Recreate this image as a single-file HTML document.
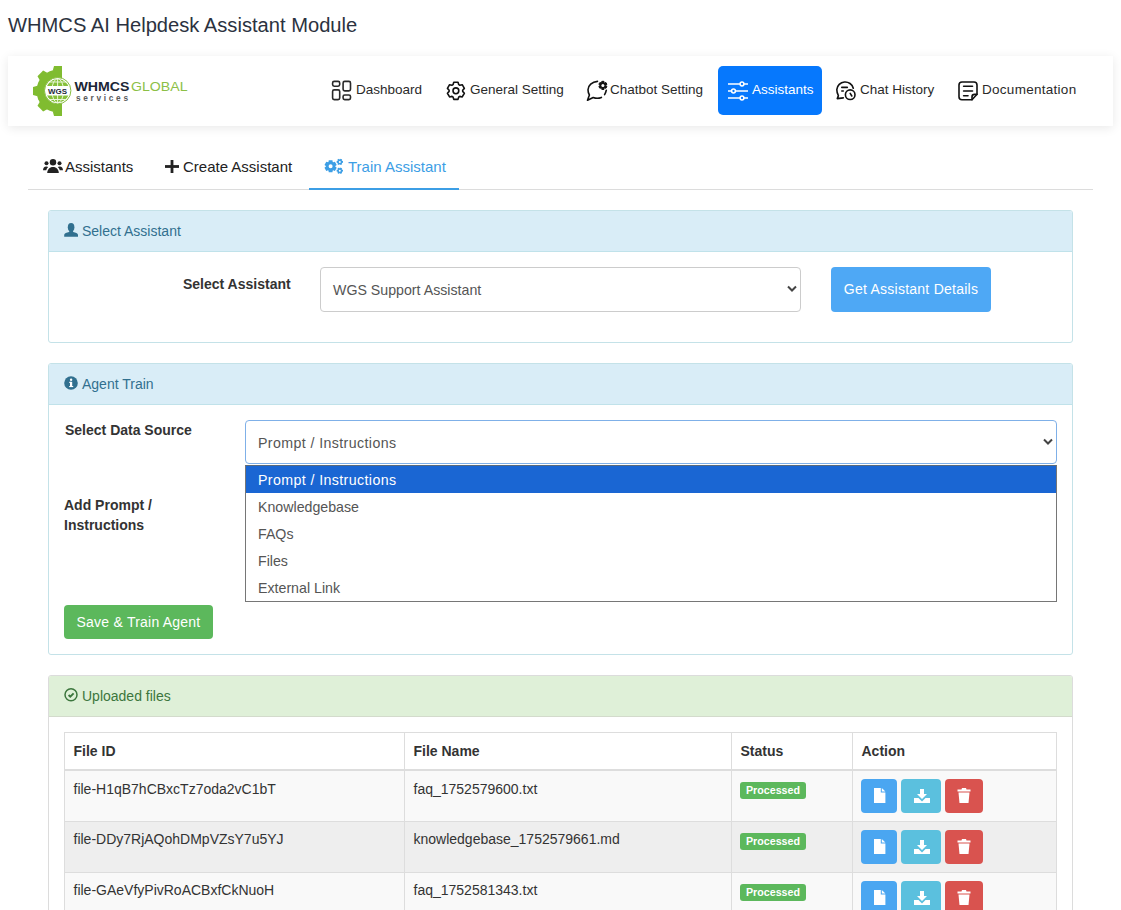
<!DOCTYPE html>
<html><head><meta charset="utf-8">
<style>
*{box-sizing:border-box;margin:0;padding:0}
html,body{width:1121px;height:910px;overflow:hidden;background:#fff;font-family:"Liberation Sans",sans-serif;color:#333}
.a{position:absolute;white-space:nowrap}
#title{left:8px;top:12px;font-size:20.15px;line-height:26px;color:#2b3240}
#nav{left:8px;top:56px;width:1105px;height:70px;background:#fff;box-shadow:0 2px 10px rgba(0,0,0,.09)}
.nt{font-size:13.5px;color:#2a2a2a;line-height:16px;top:82px}
.ico{position:absolute}
#act{left:718px;top:66px;width:104px;height:49px;background:#0678fd;border-radius:5px}
.tab{font-size:15px;line-height:18px;top:158px;color:#222}
#tabline{left:28px;top:189px;width:1065px;height:1px;background:#dcdcdc}
#tabact{left:309px;top:188px;width:150px;height:2px;background:#3c9ee5}
.panel{position:absolute;left:48px;width:1025px;border:1px solid #c4e2e8;border-radius:3px;background:#fff;overflow:hidden}
.ph{position:absolute;left:0;top:0;right:0;height:41px;background:#d9edf7;border-bottom:1px solid #c0e2ea}
.pt{font-size:14px;line-height:16px;color:#31708f}
.lbl{font-weight:bold;font-size:14px;line-height:20px;color:#333}
.box{position:absolute;border:1px solid #ccc;border-radius:4px;background:#fff}
.ot{font-size:14.2px;line-height:18px;color:#555}
.btn{position:absolute;border-radius:4px;color:#fff;font-size:14px;line-height:18px;text-align:center}
table{position:absolute;left:64px;top:732px;width:993px;border-collapse:collapse;font-size:14px;color:#333}
td,th{border:1px solid #ddd;text-align:left;vertical-align:top;padding:0 0 0 8.5px}
th{height:37px;line-height:36px;border-bottom:2px solid #ddd;font-weight:bold;padding-top:0}
td{height:51px;padding-top:8.5px;line-height:18px}
.badge{font-size:10.7px;font-weight:bold;color:#fff;background:#5cb85c;border-radius:3px;width:66px;height:17px;line-height:17px;text-align:center}
.abtn{height:34px;border-radius:4px}
</style></head><body>
<div id="title" class="a">WHMCS AI Helpdesk Assistant Module</div>

<div id="nav" class="a"></div>

<!-- logo -->
<svg class="ico" style="left:28px;top:62px" width="170" height="60" viewBox="28 62 170 60">
  <defs><clipPath id="gc"><rect x="20" y="60" width="42" height="60"/></clipPath><clipPath id="gl"><circle cx="57.7" cy="90.7" r="12"/></clipPath></defs>
  <g clip-path="url(#gc)" fill="#80bc30">
    <circle cx="58" cy="91" r="21.5"/><polygon points="52.80,111.50 54.00,116.00 62.00,116.00 63.20,111.50"/><polygon points="39.83,101.82 37.49,105.85 43.15,111.51 47.18,109.17"/><polygon points="37.50,85.80 33.00,87.00 33.00,95.00 37.50,96.20"/><polygon points="47.18,72.83 43.15,70.49 37.49,76.15 39.83,80.18"/><polygon points="63.20,70.50 62.00,66.00 54.00,66.00 52.80,70.50"/>
  </g>
  <circle cx="57.7" cy="90.7" r="13.2" fill="#fff" stroke="#86bd3e" stroke-width="1"/>
  <g clip-path="url(#gl)">
    <circle cx="57.7" cy="90.7" r="11.6" fill="#86c03a"/>
    <g stroke="#eaf7d8" stroke-width="1" fill="none">
      <ellipse cx="57.7" cy="90.7" rx="5.8" ry="12"/>
      <line x1="57.6" y1="78" x2="57.6" y2="104"/>
      <line x1="44" y1="82" x2="72" y2="82"/>
      <line x1="44" y1="99.5" x2="72" y2="99.5"/>
    </g>
    <rect x="44" y="86" width="28" height="9.5" fill="#fff"/>
  </g>
  <text x="48" y="93.6" font-family="Liberation Sans" font-weight="bold" font-size="7.4" fill="#1d2a3a" textLength="19" lengthAdjust="spacingAndGlyphs">WGS</text>
  <text x="74.5" y="91.3" font-family="Liberation Sans" font-weight="bold" font-size="13" fill="#1b2636" textLength="55" lengthAdjust="spacingAndGlyphs">WHMCS</text>
  <text x="131" y="91.3" font-family="Liberation Sans" font-size="13" fill="#8cc046" textLength="56.5" lengthAdjust="spacingAndGlyphs">GLOBAL</text>
  <text x="76" y="100.8" font-family="Liberation Sans" font-weight="bold" font-size="8.3" fill="#5a5a5a" textLength="52" lengthAdjust="spacing">services</text>
</svg>

<!-- nav items -->
<svg class="ico" style="left:327px;top:76px" width="30" height="28" viewBox="0 0 30 28" fill="none" stroke="#2a2a2a" stroke-width="1.6">
  <rect x="5.6" y="5.4" width="7.1" height="4.8" rx="1.6"/><rect x="5.6" y="13.9" width="7.1" height="9.7" rx="1.6"/>
  <rect x="16.1" y="5.4" width="7.4" height="9.5" rx="1.6"/><rect x="16.1" y="19" width="7.4" height="4.6" rx="1.6"/>
</svg>
<div class="a nt" style="left:356px">Dashboard</div>

<svg class="ico" style="left:442px;top:76px" width="30" height="28" viewBox="0 0 30 28" fill="none" stroke="#111" stroke-width="1.6" stroke-linejoin="round">
  <path d="M11.03 8.64L11.77 6.26L16.03 6.26L16.77 8.64A6.80 6.80 0 0 1 17.80 9.23L20.23 8.69L22.36 12.37L20.67 14.21A6.80 6.80 0 0 1 20.67 15.39L22.36 17.23L20.23 20.91L17.80 20.37A6.80 6.80 0 0 1 16.77 20.96L16.03 23.34L11.77 23.34L11.03 20.96A6.80 6.80 0 0 1 10.00 20.37L7.57 20.91L5.44 17.23L7.13 15.39A6.80 6.80 0 0 1 7.13 14.21L5.44 12.37L7.57 8.69L10.00 9.23A6.80 6.80 0 0 1 11.03 8.64Z"/>
  <circle cx="13.9" cy="14.8" r="2.9"/>
</svg>
<div class="a nt" style="left:470px">General Setting</div>

<svg class="ico" style="left:582px;top:76px" width="30" height="28" viewBox="0 0 30 28" fill="none" stroke="#111" stroke-width="1.6" stroke-linecap="round" stroke-linejoin="round">
  <path d="M15.5 5.4C10 5.8 6 9.5 6 13.8c0 2.2.5 3.8 1.4 5.2L5.5 24.3l5.7-2.8c2.8 1.1 5.8.9 8.2-.1"/>
  <path d="M24.3 14.2c-.3 1.6-.8 3.1-1.7 4.4"/>
  <path d="M19.72 6.75L19.81 5.34L21.99 5.34L22.08 6.75A2.90 2.90 0 0 1 22.60 7.05L23.87 6.43L24.96 8.31L23.78 9.10A2.90 2.90 0 0 1 23.78 9.70L24.96 10.49L23.87 12.37L22.60 11.75A2.90 2.90 0 0 1 22.08 12.05L21.99 13.46L19.81 13.46L19.72 12.05A2.90 2.90 0 0 1 19.20 11.75L17.93 12.37L16.84 10.49L18.02 9.70A2.90 2.90 0 0 1 18.02 9.10L16.84 8.31L17.93 6.43L19.20 7.05A2.90 2.90 0 0 1 19.72 6.75Z" fill="#111" stroke-width="1"/>
  <circle cx="20.9" cy="9.4" r="1.5" fill="#fff" stroke="none"/>
</svg>
<div class="a nt" style="left:610px">Chatbot Setting</div>

<div id="act" class="a"></div>
<svg class="ico" style="left:718px;top:66px" width="104" height="49" viewBox="718 66 104 49" fill="none" stroke="#fff" stroke-width="1.5">
  <line x1="728" y1="84" x2="740" y2="84"/><line x1="744" y1="84" x2="748" y2="84"/><circle cx="742" cy="84" r="1.9"/>
  <line x1="728" y1="91" x2="731.5" y2="91"/><line x1="735.5" y1="91" x2="748" y2="91"/><circle cx="733.5" cy="91" r="1.9"/>
  <line x1="728" y1="98" x2="740" y2="98"/><line x1="744" y1="98" x2="748" y2="98"/><circle cx="742" cy="98" r="1.9"/>
</svg>
<div class="a nt" style="left:752px;color:#fff">Assistants</div>

<svg class="ico" style="left:832px;top:76px" width="30" height="28" viewBox="0 0 30 28" fill="none" stroke="#111" stroke-width="1.6" stroke-linecap="round" stroke-linejoin="round">
  <path d="M21.3 12.2A8.4 8.3 0 0 0 4.8 13.6c0 2.4.6 4.3 1.6 6L5.3 22.6l6-.7"/>
  <line x1="9.8" y1="11.4" x2="15.3" y2="11.4"/><line x1="9.8" y1="15" x2="11.3" y2="15"/>
  <circle cx="18.2" cy="18.7" r="4.8"/><path d="M18.2 17.4l1.6 2.6"/>
</svg>
<div class="a nt" style="left:860px">Chat History</div>

<svg class="ico" style="left:953px;top:76px" width="30" height="28" viewBox="0 0 30 28" fill="none" stroke="#111" stroke-width="1.6" stroke-linecap="round" stroke-linejoin="round">
  <path d="M9 6h12a3 3 0 0 1 3 3v9.3L19 23.7H9a3 3 0 0 1-3-3V9a3 3 0 0 1 3-3z"/>
  <path d="M24 18.4h-2.5a2.5 2.5 0 0 0-2.5 2.5v2.8"/>
  <line x1="10.6" y1="10.3" x2="19.5" y2="10.3"/><line x1="10.6" y1="15" x2="19.5" y2="15"/><line x1="10.6" y1="19.7" x2="15" y2="19.7"/>
</svg>
<div class="a nt" style="left:982px;letter-spacing:.28px">Documentation</div>

<!-- tabs -->
<svg class="ico" style="left:43px;top:159px" width="20" height="14" viewBox="0 0 20 14" fill="#222">
  <circle cx="10" cy="3.3" r="3.2"/><path d="M4.2 14c0-3.3 2.3-6 5.8-6s5.8 2.7 5.8 6z"/>
  <circle cx="3.5" cy="4.3" r="2"/><path d="M0 11.2c0-2.2 1.3-3.7 3.2-3.7 1 0 1.6.3 2 .6-1 .9-1.7 2-2 3.1z"/>
  <circle cx="16.5" cy="4.3" r="2"/><path d="M20 11.2c0-2.2-1.3-3.7-3.2-3.7-1 0-1.6.3-2 .6 1 .9 1.7 2 2 3.1z"/>
</svg>
<div class="a tab" style="left:65px">Assistants</div>
<svg class="ico" style="left:165px;top:160px" width="14" height="13" viewBox="0 0 14 13" fill="#222">
  <rect x="5.6" y="0" width="2.8" height="13"/><rect x="0" y="5.1" width="14" height="2.8"/>
</svg>
<div class="a tab" style="left:183px">Create Assistant</div>
<svg class="ico" style="left:318px;top:154px" width="30" height="24" viewBox="318 154 30 24" fill="#3c9ee5" fill-rule="evenodd"><path d="M328.47 162.11L328.76 160.28L332.44 160.28L332.73 162.11A4.70 4.70 0 0 1 333.16 162.36L334.90 161.69L336.74 164.88L335.29 166.05A4.70 4.70 0 0 1 335.29 166.55L336.74 167.72L334.90 170.91L333.16 170.24A4.70 4.70 0 0 1 332.73 170.49L332.44 172.32L328.76 172.32L328.47 170.49A4.70 4.70 0 0 1 328.04 170.24L326.30 170.91L324.46 167.72L325.91 166.55A4.70 4.70 0 0 1 325.91 166.05L324.46 164.88L326.30 161.69L328.04 162.36A4.70 4.70 0 0 1 328.47 162.11ZM328.60 166.30a2.00 2.00 0 1 0 4.00 0a2.00 2.00 0 1 0 -4.00 0Z"/><path d="M339.97 159.51L340.60 158.70L342.17 159.61L341.79 160.56A2.40 2.40 0 0 1 341.96 160.85L342.97 160.99L342.97 162.81L341.96 162.95A2.40 2.40 0 0 1 341.79 163.24L342.17 164.19L340.60 165.10L339.97 164.29A2.40 2.40 0 0 1 339.63 164.29L339.00 165.10L337.43 164.19L337.81 163.24A2.40 2.40 0 0 1 337.64 162.95L336.63 162.81L336.63 160.99L337.64 160.85A2.40 2.40 0 0 1 337.81 160.56L337.43 159.61L339.00 158.70L339.63 159.51A2.40 2.40 0 0 1 339.97 159.51ZM338.80 161.90a1.00 1.00 0 1 0 2.00 0a1.00 1.00 0 1 0 -2.00 0Z"/><path d="M339.97 168.31L340.60 167.50L342.17 168.41L341.79 169.36A2.40 2.40 0 0 1 341.96 169.65L342.97 169.79L342.97 171.61L341.96 171.75A2.40 2.40 0 0 1 341.79 172.04L342.17 172.99L340.60 173.90L339.97 173.09A2.40 2.40 0 0 1 339.63 173.09L339.00 173.90L337.43 172.99L337.81 172.04A2.40 2.40 0 0 1 337.64 171.75L336.63 171.61L336.63 169.79L337.64 169.65A2.40 2.40 0 0 1 337.81 169.36L337.43 168.41L339.00 167.50L339.63 168.31A2.40 2.40 0 0 1 339.97 168.31ZM338.80 170.70a1.00 1.00 0 1 0 2.00 0a1.00 1.00 0 1 0 -2.00 0Z"/></svg>
<div class="a tab" style="left:348px;color:#3c9ee5">Train Assistant</div>
<div id="tabline" class="a"></div>
<div id="tabact" class="a"></div>

<!-- panel 1 -->
<div class="panel" style="top:210px;height:133px"><div class="ph"></div></div>
<svg class="ico" style="left:60px;top:218px" width="24" height="24" viewBox="0 0 24 24" fill="#31708f"><ellipse cx="11.1" cy="9.2" rx="3.3" ry="4.3"/><path d="M9.5 12.5h3.4l.3 1.6c2.5.6 4.5 1.4 4.8 2.6v2H4.2v-2c.3-1.2 2.3-2 4.9-2.6z"/></svg>
<div class="a pt" style="left:82px;top:223px">Select Assistant</div>
<div class="a lbl" style="left:183px;top:274px">Select Assistant</div>
<div class="box" style="left:320px;top:267px;width:481px;height:45px"></div>
<div class="a ot" style="left:333px;top:281px">WGS Support Assistant</div>
<svg class="ico" style="left:787px;top:285px" width="10" height="8" viewBox="0 0 10 8" fill="none" stroke="#444" stroke-width="2"><path d="M1 1.5l4 4 4-4"/></svg>
<div class="btn" style="left:831px;top:267px;width:160px;height:45px;background:#4ea8f5;line-height:45px;letter-spacing:.25px">Get Assistant Details</div>

<!-- panel 2 -->
<div class="panel" style="top:363px;height:292px"><div class="ph"></div></div>
<svg class="ico" style="left:64px;top:376px" width="14" height="14" viewBox="0 0 14 14">
  <circle cx="7" cy="7" r="6.8" fill="#31708f"/><rect x="6" y="5.8" width="2.2" height="5.2" fill="#fff"/><circle cx="7.1" cy="3.8" r="1.2" fill="#fff"/><rect x="5.2" y="5.8" width="1.5" height="1.1" fill="#fff"/><rect x="5.2" y="10" width="4" height="1.1" fill="#fff"/>
</svg>
<div class="a pt" style="left:82px;top:376px">Agent Train</div>
<div class="a lbl" style="left:65px;top:420px">Select Data Source</div>
<div class="box" style="left:245px;top:420px;width:812px;height:44px;border-color:#7fb0e8"></div>
<div class="a ot" style="left:258px;top:434px;letter-spacing:.4px">Prompt / Instructions</div>
<svg class="ico" style="left:1043px;top:438px" width="10" height="8" viewBox="0 0 10 8" fill="none" stroke="#444" stroke-width="2"><path d="M1 1.5l4 4 4-4"/></svg>
<div class="a lbl" style="left:64px;top:495px">Add Prompt /</div>
<div class="a lbl" style="left:64px;top:515px">Instructions</div>
<div class="btn" style="left:64px;top:605px;width:149px;height:34px;background:#5cb85c;line-height:34px;letter-spacing:.23px">Save &amp; Train Agent</div>

<!-- dropdown -->
<div class="a" style="left:245px;top:465px;width:812px;height:137px;background:#fff;border:1px solid #767676;border-top-color:#5a6a7a"></div>
<div class="a" style="left:246px;top:466px;width:810px;height:27px;background:#1a66d3"></div>
<div class="a ot" style="left:258px;top:471px;color:#fff;letter-spacing:.4px">Prompt / Instructions</div>
<div class="a ot" style="left:258px;top:498px">Knowledgebase</div>
<div class="a ot" style="left:258px;top:525px">FAQs</div>
<div class="a ot" style="left:258px;top:552px">Files</div>
<div class="a ot" style="left:258px;top:579px">External Link</div>

<!-- panel 3 -->
<div class="panel" style="top:675px;height:300px;border-color:#dcdcdc"><div class="ph" style="background:#dff0d8;border-color:#d3dbcc"></div></div>
<svg class="ico" style="left:64px;top:688px" width="14" height="14" viewBox="0 0 14 14" fill="none" stroke="#3c763d" stroke-width="1.5">
  <circle cx="7" cy="6.8" r="6"/><path d="M4.6 7l1.7 1.7 3.3-3.4" stroke-width="1.9"/>
</svg>
<div class="a pt" style="left:82px;top:688px;color:#3c763d">Uploaded files</div>

<table>
<tr><th style="width:340px">File ID</th><th style="width:327px">File Name</th><th style="width:121px">Status</th><th>Action</th></tr>
<tr style="background:#f9f9f9"><td>file-H1qB7hCBxcTz7oda2vC1bT</td><td>faq_1752579600.txt</td><td></td><td></td></tr>
<tr style="background:#eeeeee"><td>file-DDy7RjAQohDMpVZsY7u5YJ</td><td>knowledgebase_1752579661.md</td><td></td><td></td></tr>
<tr style="background:#f9f9f9"><td>file-GAeVfyPivRoACBxfCkNuoH</td><td>faq_1752581343.txt</td><td></td><td></td></tr>
</table>

<div class="a badge" style="left:740px;top:782px">Processed</div>
<div class="a abtn" style="left:861px;top:779px;width:36px;background:#4aa6f1"><svg width="12" height="16" viewBox="0 0 12 16" style="position:absolute;left:13px;top:9px" fill="#fff"><path d="M0 0h6.8v4.6h4.6V15H0z"/><path d="M7.8 0l3.6 3.6H7.8z"/></svg></div>
<div class="a abtn" style="left:901px;top:779px;width:40px;background:#5bc0de"><svg width="16" height="14" viewBox="0 0 16 14" style="position:absolute;left:12.5px;top:9.5px" fill="#fff"><path d="M6 0h4v5h3l-5 5-5-5h3z"/><path d="M0 9h4.5l3.5 3.5L11.5 9H16v5H0z"/></svg></div>
<div class="a abtn" style="left:945px;top:779px;width:38px;background:#d9534f"><svg width="14" height="15" viewBox="0 0 14 15" style="position:absolute;left:12px;top:9px" fill="#fff"><path d="M5 0h4l.5 1.5H13.5v2H.5v-2H4.5z"/><path d="M1.5 4.5h11l-1 10.5H2.5z"/></svg></div>
<div class="a badge" style="left:740px;top:833px">Processed</div>
<div class="a abtn" style="left:861px;top:830px;width:36px;background:#4aa6f1"><svg width="12" height="16" viewBox="0 0 12 16" style="position:absolute;left:13px;top:9px" fill="#fff"><path d="M0 0h6.8v4.6h4.6V15H0z"/><path d="M7.8 0l3.6 3.6H7.8z"/></svg></div>
<div class="a abtn" style="left:901px;top:830px;width:40px;background:#5bc0de"><svg width="16" height="14" viewBox="0 0 16 14" style="position:absolute;left:12.5px;top:9.5px" fill="#fff"><path d="M6 0h4v5h3l-5 5-5-5h3z"/><path d="M0 9h4.5l3.5 3.5L11.5 9H16v5H0z"/></svg></div>
<div class="a abtn" style="left:945px;top:830px;width:38px;background:#d9534f"><svg width="14" height="15" viewBox="0 0 14 15" style="position:absolute;left:12px;top:9px" fill="#fff"><path d="M5 0h4l.5 1.5H13.5v2H.5v-2H4.5z"/><path d="M1.5 4.5h11l-1 10.5H2.5z"/></svg></div>
<div class="a badge" style="left:740px;top:884px">Processed</div>
<div class="a abtn" style="left:861px;top:881px;width:36px;background:#4aa6f1"><svg width="12" height="16" viewBox="0 0 12 16" style="position:absolute;left:13px;top:9px" fill="#fff"><path d="M0 0h6.8v4.6h4.6V15H0z"/><path d="M7.8 0l3.6 3.6H7.8z"/></svg></div>
<div class="a abtn" style="left:901px;top:881px;width:40px;background:#5bc0de"><svg width="16" height="14" viewBox="0 0 16 14" style="position:absolute;left:12.5px;top:9.5px" fill="#fff"><path d="M6 0h4v5h3l-5 5-5-5h3z"/><path d="M0 9h4.5l3.5 3.5L11.5 9H16v5H0z"/></svg></div>
<div class="a abtn" style="left:945px;top:881px;width:38px;background:#d9534f"><svg width="14" height="15" viewBox="0 0 14 15" style="position:absolute;left:12px;top:9px" fill="#fff"><path d="M5 0h4l.5 1.5H13.5v2H.5v-2H4.5z"/><path d="M1.5 4.5h11l-1 10.5H2.5z"/></svg></div>
</body></html>
